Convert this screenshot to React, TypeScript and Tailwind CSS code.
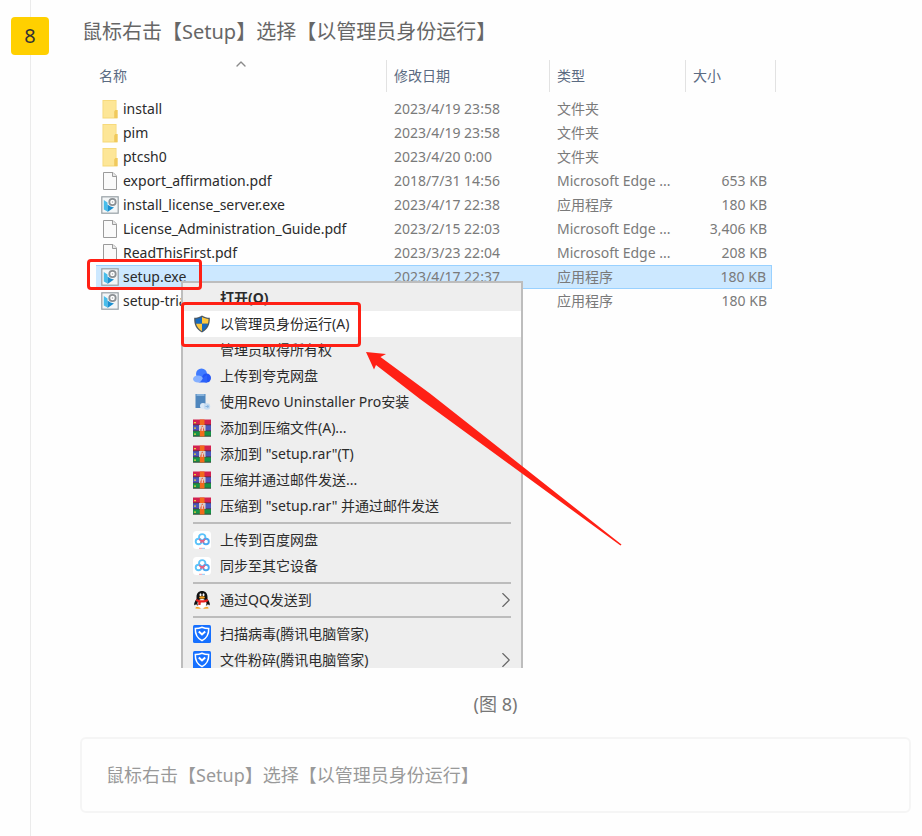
import { Fragment } from 'react';
import clsx from 'clsx';
import { ChevronRight, ChevronUp } from 'lucide-react';

type FileKind = 'folder' | 'pdf' | 'exe';

interface FileRow {
  name: string;
  kind: FileKind;
  date: string;
  type: string;
  size?: string;
  selected?: boolean;
}

type MenuIconName = 'shield' | 'cloud' | 'revo' | 'rar' | 'baidu' | 'qq' | 'guard' | 'none';

interface MenuEntry {
  label: string;
  icon: MenuIconName;
  bold?: boolean;
  active?: boolean;
  submenu?: boolean;
}

const files: FileRow[] = [
  { name: 'install', kind: 'folder', date: '2023/4/19 23:58', type: '文件夹' },
  { name: 'pim', kind: 'folder', date: '2023/4/19 23:58', type: '文件夹' },
  { name: 'ptcsh0', kind: 'folder', date: '2023/4/20 0:00', type: '文件夹' },
  { name: 'export_affirmation.pdf', kind: 'pdf', date: '2018/7/31 14:56', type: 'Microsoft Edge ...', size: '653 KB' },
  { name: 'install_license_server.exe', kind: 'exe', date: '2023/4/17 22:38', type: '应用程序', size: '180 KB' },
  { name: 'License_Administration_Guide.pdf', kind: 'pdf', date: '2023/2/15 22:03', type: 'Microsoft Edge ...', size: '3,406 KB' },
  { name: 'ReadThisFirst.pdf', kind: 'pdf', date: '2023/3/23 22:04', type: 'Microsoft Edge ...', size: '208 KB' },
  { name: 'setup.exe', kind: 'exe', date: '2023/4/17 22:37', type: '应用程序', size: '180 KB', selected: true },
  { name: 'setup-tria', kind: 'exe', date: '', type: '应用程序', size: '180 KB' },
];

// Each inner array is a group, groups are split by a separator
const menuGroups: MenuEntry[][] = [
  [
    { label: '打开(O)', icon: 'none', bold: true },
    { label: '以管理员身份运行(A)', icon: 'shield', active: true },
    { label: '管理员取得所有权', icon: 'none' },
    { label: '上传到夸克网盘', icon: 'cloud' },
    { label: '使用Revo Uninstaller Pro安装', icon: 'revo' },
    { label: '添加到压缩文件(A)...', icon: 'rar' },
    { label: '添加到 "setup.rar"(T)', icon: 'rar' },
    { label: '压缩并通过邮件发送...', icon: 'rar' },
    { label: '压缩到 "setup.rar" 并通过邮件发送', icon: 'rar' },
  ],
  [
    { label: '上传到百度网盘', icon: 'baidu' },
    { label: '同步至其它设备', icon: 'baidu' },
  ],
  [{ label: '通过QQ发送到', icon: 'qq', submenu: true }],
  [
    { label: '扫描病毒(腾讯电脑管家)', icon: 'guard' },
    { label: '文件粉碎(腾讯电脑管家)', icon: 'guard', submenu: true },
  ],
];

const FileIcon = ({ kind }: { kind: FileKind }) => {
  if (kind === 'folder') {
    return (
      <svg viewBox="0 0 18 20" className="h-5 w-[18px] shrink-0">
        <path d="M1.500 1h14v10h1v8.500h-15z" fill="#f6d776" />
        <path d="M2.300 1.800h12.500v16.700h-12.500z" fill="#fde697" />
        <path d="M13.200 19v-6.500l1-1.500h2.300v8z" fill="#f0c95c" />
      </svg>
    );
  }
  if (kind === 'pdf') {
    return (
      <svg viewBox="0 0 18 20" className="h-5 w-[18px] shrink-0">
        <path d="M2.500 1.500h9.500l3.500 3.500v13.500h-13z" fill="#fafafa" stroke="#9b9b9b" />
        <path d="M11.500 1.500v4h4" fill="#e8e8e8" stroke="#9b9b9b" />
      </svg>
    );
  }
  return (
    <svg viewBox="0 0 18 20" className="h-5 w-[18px] shrink-0">
      <rect x=".8" y="1.800" width="16.400" height="16.400" fill="#f3f6f7" stroke="#97a0a5" strokeWidth="1.200" />
      <path d="M2.800 5l3.700 2.500v9l-3.700-2z" fill="#48bdea" />
      <path d="M6.500 9.500l3 2 3.500 1-6.500 4.500z" fill="#1a8fd0" />
      <circle cx="11.500" cy="7" r="3.200" fill="#fff" stroke="#8b9094" strokeWidth="1.800" />
      <circle cx="11.500" cy="7" r=".8" fill="#a5aaad" />
    </svg>
  );
};

const MenuIcon = ({ name }: { name: MenuIconName }) => {
  const className = 'size-[18px] shrink-0';
  switch (name) {
    case 'shield':
      return (
        <svg viewBox="0 0 18 18" className={className}>
          <path d="M9 .5c2.500 1.700 5 2.200 7.800 2.300.3 6.700-1.800 11.700-7.800 14.700C3 14.500.9 9.500 1.200 2.800 4 2.700 6.500 2.200 9 .5z" fill="#4d5963" />
          <path d="M9 2C7 3.200 4.800 3.800 2.500 4c0 1.800.2 3.300.6 4.700H9z" fill="#1769be" />
          <path d="M9 2c2 1.200 4.200 1.800 6.500 2 0 1.800-.2 3.300-.6 4.700H9z" fill="#ffc83d" />
          <path d="M3.100 8.700C4 12 6 14.500 9 16.200V8.700z" fill="#ffc83d" />
          <path d="M14.900 8.700C14 12 12 14.500 9 16.200V8.700z" fill="#1769be" />
        </svg>
      );
    case 'cloud':
      return (
        <svg viewBox="0 0 18 18" className={className}>
          <circle cx="8.500" cy="7" r="5.500" fill="#3f7bff" />
          <circle cx="13.500" cy="11" r="4.500" fill="#2456f5" />
          <ellipse cx="5" cy="12" rx="5" ry="3.500" fill="#86b0ff" />
          <path d="M5 15.500c4 0 4-5.500 9-7.600v7.600H5z" fill="#2c62fa" />
        </svg>
      );
    case 'revo':
      return (
        <svg viewBox="0 0 18 18" className={className}>
          <path d="M2.500 1h10v14h-10z" fill="#4f86bd" />
          <path d="M3.500 1h8v2h-8z" fill="#86b1da" />
          <circle cx="10" cy="13" r="3" fill="#dbe9f7" />
          <circle cx="14" cy="13.500" r="3.200" fill="#c5dcf2" />
          <path d="M12.500 13.500h3M14.500 12l1 1.500-1 1.500" fill="none" stroke="#88b4df" />
        </svg>
      );
    case 'rar':
      return (
        <svg viewBox="0 0 18 18" className={className}>
          <path d="M0 .5h18v5.500H0z" fill="#d2214f" />
          <path d="M0 6h18v6H0z" fill="#4a55bb" />
          <path d="M0 12h18v5.500H0z" fill="#169347" />
          <path d="M0 5.500h18v.8H0zM0 11.500h18v.8H0zM0 16.800h18v.7H0z" fill="#4a2b37" />
          <path d="M1 3h2v1.300H1zM1 8.500h2v1.300H1zM1 14.500h2v1.300H1z" fill="#e8d13c" />
          <path d="M6.800 .5h4.700v17H6.800z" fill="#f26a1b" />
          <path d="M6 6h6.500v6H6z" fill="#d8cdc9" />
          <path d="M9.200 6.300l2.300 5.500H7z" fill="#e2512b" />
          <path d="M8.700 8h1v3.800h-1z" fill="#fff" />
        </svg>
      );
    case 'baidu':
      return (
        <svg viewBox="0 0 18 18" className={className}>
          <rect width="18" height="18" rx="3.500" fill="#fff" />
          <circle cx="9.200" cy="6.300" r="3.200" fill="none" stroke="#5cc3fa" strokeWidth="1.900" />
          <circle cx="5.500" cy="10.500" r="2.800" fill="none" stroke="#5cc3fa" strokeWidth="1.900" />
          <circle cx="13" cy="10.500" r="2.800" fill="none" stroke="#4aa9f3" strokeWidth="1.900" />
          <path d="M6.300 7.800c.5 1.500 1.500 2.200 2.900 2.200s2.400-.7 2.900-2.200M7.500 11.800l1.700-2 1.800 2" fill="none" stroke="#ee5f80" strokeWidth="1.400" />
          <path d="M6 17.300h3" stroke="#f59aab" />
          <path d="M9 17.300h3" stroke="#8fcaf8" />
        </svg>
      );
    case 'qq':
      return (
        <svg viewBox="0 0 18 18" className={className}>
          <path d="M3.500 6C3.500 2 6 0 9 0s5.500 2 5.500 6v2c1.500 2 2.800 4.500 2.200 6.300-.6.300-1.400-.7-1.800-1.200-.6 3-11.200 3-11.800 0-.4.500-1.200 1.500-1.800 1.200C.7 12.500 2 10 3.500 8z" fill="#111" />
          <ellipse cx="9" cy="12.500" rx="4.500" ry="4.500" fill="#fff" />
          <ellipse cx="7.500" cy="3.800" rx="1" ry="1.500" fill="#fff" />
          <ellipse cx="10.500" cy="3.800" rx="1" ry="1.500" fill="#fff" />
          <ellipse cx="9" cy="6.500" rx="3" ry="1.200" fill="#f9a11b" />
          <path d="M3.500 8c3 1.800 8 1.800 11 0l.8 2c-2 1.200-4.500 1.700-7.500 1.500L7.500 14H5.300v-3L2.800 10z" fill="#e8201f" />
          <path d="M2.500 17.500c-.5-1.500 2-2.300 5-.5v.8zM15.500 17.500c.5-1.500-2-2.300-5-.5v.8z" fill="#f9a11b" />
        </svg>
      );
    case 'guard':
      return (
        <svg viewBox="0 0 18 18" className={className}>
          <rect width="18" height="18" rx="1.500" fill="#1670ff" />
          <path d="M9 2.300c2 .9 4.400 1.300 6.700 1.300.2 5.200-2.100 9.600-6.700 12.100-4.600-2.500-6.900-6.900-6.700-12.100C4.600 3.600 7 3.200 9 2.300z" fill="none" stroke="#fff" strokeWidth="1.500" />
          <path d="M5.800 6.500L9 9.500l3.200-3" fill="none" stroke="#fff" strokeWidth="2" />
        </svg>
      );
    default:
      return <span className={className} />;
  }
};

const FileTable = () => (
  <table className="ml-4 w-[680px] table-fixed border-separate border-spacing-0 text-left text-sm leading-5 text-[#7a7a7a]">
    <colgroup>
      <col className="w-[291px]" />
      <col className="w-[163px]" />
      <col className="w-[136px]" />
      <col className="w-[86px]" />
      <col className="w-1" />
    </colgroup>
    <thead className="text-[#5b6b82]">
      <tr className="h-8">
        <th className="relative border-r border-[#e2e2e2] pl-[3px] font-normal">
          名称
          <ChevronUp className="absolute -top-1 left-1/2 -ml-2 size-4 text-[#8a8a8a]" strokeWidth={2} />
        </th>
        <th className="border-r border-[#e2e2e2] pl-[7px] font-normal">修改日期</th>
        <th className="border-r border-[#e2e2e2] pl-[7px] font-normal">类型</th>
        <th colSpan={2} className="border-r border-[#e2e2e2] pl-[7px] font-normal">
          大小
        </th>
      </tr>
    </thead>
    <tbody className="before:block before:h-[5px] before:content-['']">
      {files.map((file) => {
        const cell = clsx('h-6 whitespace-nowrap', file.selected && 'border-y border-[#99d1ff] bg-[#cce8ff]');
        return (
          <tr key={file.name}>
            <td className={clsx(cell, 'pl-[5px] text-[#2b2b2b]')}>
              <div className="flex items-center gap-1">
                <FileIcon kind={file.kind} />
                {file.name}
              </div>
            </td>
            <td className={clsx(cell, 'pl-[7px]')}>{file.date}</td>
            <td className={clsx(cell, 'pl-[7px]')}>{file.type}</td>
            <td className={clsx(cell, 'pr-[5px] text-right', file.selected && 'border-r')}>{file.size}</td>
            <td />
          </tr>
        );
      })}
    </tbody>
  </table>
);

const ContextMenu = () => (
  <div className="relative -mt-8 ml-[101px] h-[387px] w-[342px] overflow-hidden border-2 border-b-0 border-[#bdbdbd] bg-[#eeeeee] pt-[2px] text-sm leading-4 text-[#2b2b2b]">
    {menuGroups.map((group, index) => (
      <Fragment key={index}>
        {index > 0 && <hr className="mx-[10px] my-[3px] border-t-2 border-[#bcbcbc]" />}
        {group.map((entry) => (
          <button
            key={entry.label}
            type="button"
            className={clsx(
              'flex h-[26px] w-full items-center gap-[9px] px-[10px] text-left whitespace-nowrap',
              entry.bold && 'font-bold',
              entry.active && 'bg-white'
            )}
          >
            <MenuIcon name={entry.icon} />
            <span className="flex-1">{entry.label}</span>
            {entry.submenu && <ChevronRight className="-mr-2 size-[26px] text-[#666666]" strokeWidth={1} />}
          </button>
        ))}
      </Fragment>
    ))}
  </div>
);

const App = () => {
  return (
    <div className="flex min-h-screen bg-[#fefefe] font-['Noto_Sans','Noto_Sans_CJK_SC',sans-serif]">
      {/* Step timeline */}
      <div className="flex w-[60px] shrink-0 flex-col items-center">
        <div className="h-[17px] w-px bg-[#ebebeb]" />
        <div className="flex size-[38px] items-center justify-center rounded bg-[#ffd000] text-xl text-[#333333]">8</div>
        <div className="w-px flex-1 bg-[#ebebeb]" />
      </div>

      <main className="min-w-0 flex-1 pt-[18px] pr-[11px] pb-[22px] pl-5">
        <h2 className="pl-[2px] text-xl leading-7 text-[#666666]">鼠标右击【Setup】选择【以管理员身份运行】</h2>

        <figure className="relative pt-[14px]">
          <FileTable />
          <ContextMenu />

          {/* Red callouts over the window */}
          <div className="absolute top-[213px] left-[7px] h-[31px] w-[115px] rounded-sm border-3 border-[#ff2015]" />
          <div className="absolute top-[256px] left-[101px] h-[45px] w-[180px] rounded-sm border-3 border-[#ff2015]" />
          <svg viewBox="0 0 256 194" className="absolute top-[306px] left-[286px] h-[194px] w-[256px]">
            <path d="M0 0L20 2L14.500 5L64 41.500L255.500 192.500L254.500 193.500L54 47L10 13L8 17.500Z" fill="#ff2015" />
          </svg>

          <figcaption className="mt-[22px] text-center text-lg leading-7 text-[#777777]">(图 8)</figcaption>
        </figure>

        <div className="mt-[19px] rounded-md border-2 border-[#f5f5f5] px-6 py-[22px] text-lg leading-7 text-[#999999]">
          鼠标右击【Setup】选择【以管理员身份运行】
        </div>
      </main>
    </div>
  );
};

export default App;
